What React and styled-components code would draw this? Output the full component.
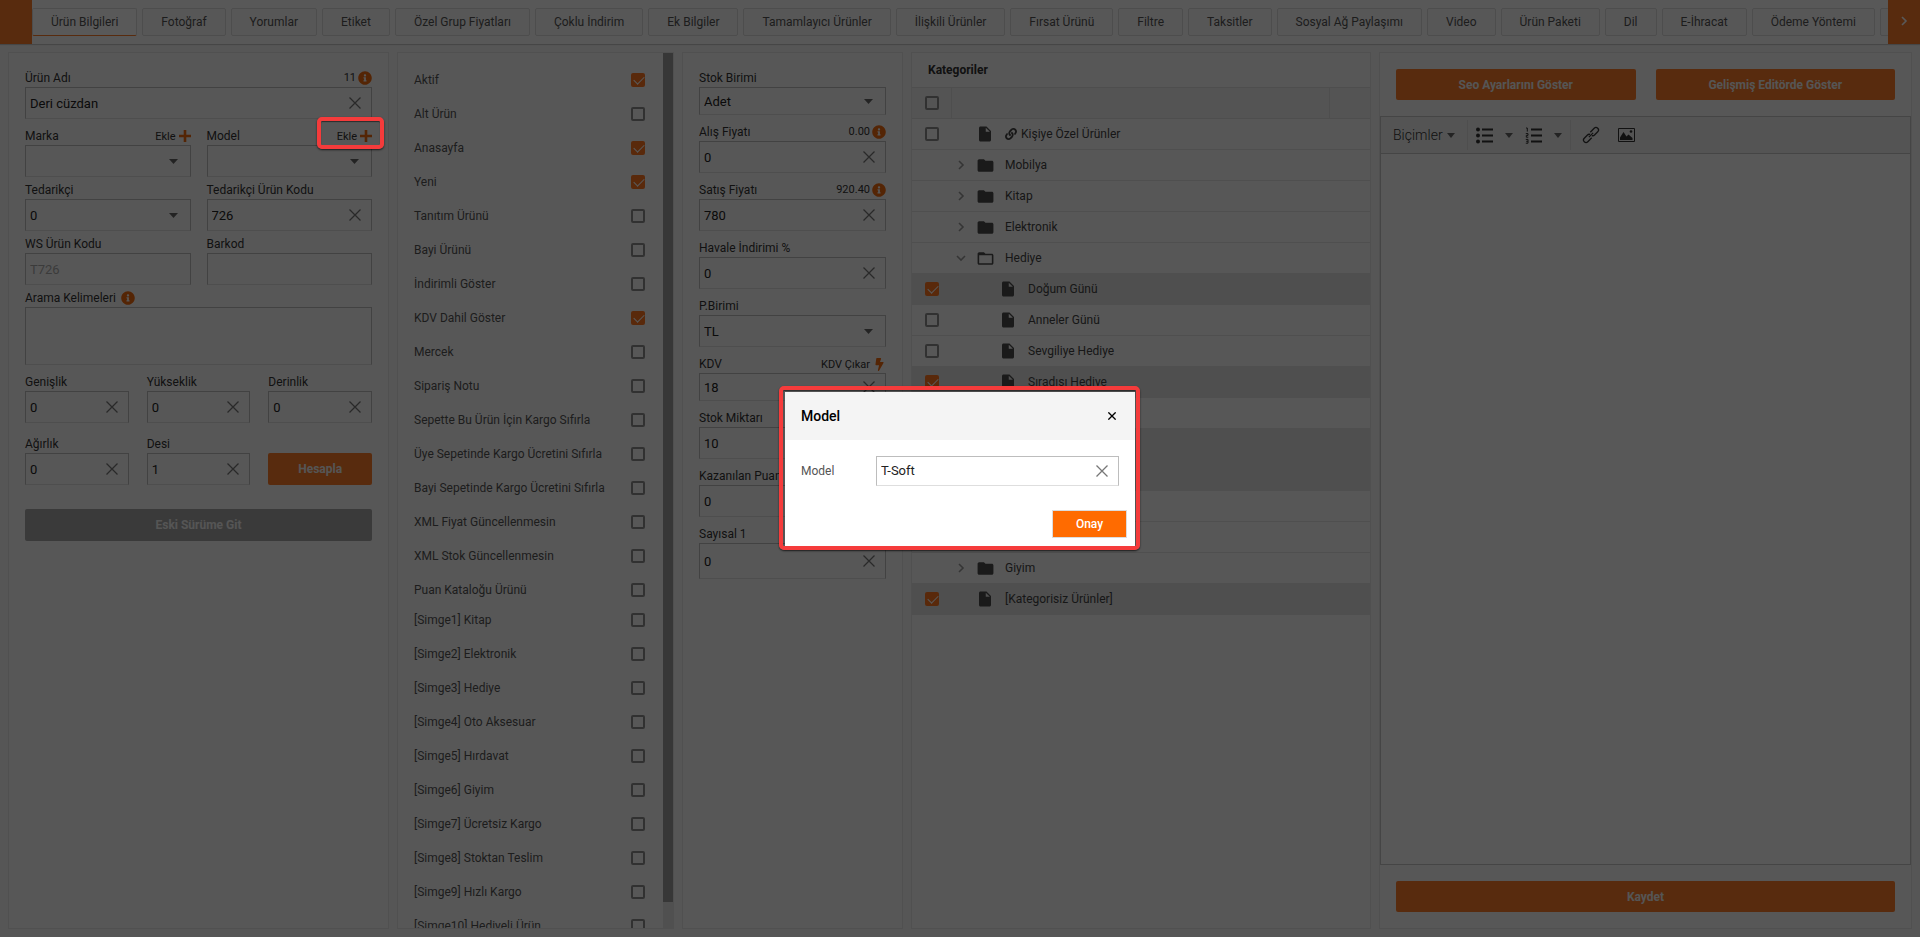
import React from 'react';
import styled, { createGlobalStyle } from 'styled-components';
import { FaBolt, FaInfoCircle, FaLink, FaPlus } from 'react-icons/fa';
import { MdFolder, MdFolderOpen, MdInsertDriveFile } from 'react-icons/md';

const GlobalStyle = createGlobalStyle`
  * {
    box-sizing: border-box;
  }

  body {
    margin: 0;
    background: #f7f7f7;
    color: #333;
    font-family: Roboto, 'Liberation Sans', sans-serif;
    font-size: 12px;
  }

  button, input, select, textarea {
    font-family: inherit;
    font-size: inherit;
    color: inherit;
  }
`;

const Page = styled.div`
  display: flex;
  flex-direction: column;
  height: 100vh;
`;

/* tabs */

const TabBar = styled.header`
  display: flex;
  flex: none;
  height: 44px;
  background: #fdfdfd;
  box-shadow: 0 1px 1px #c8c8c8;
`;

const ScrollButton = styled.button`
  flex: none;
  width: 32px;
  padding: 0;
  border: 0;
  background: #fc7b28;
  color: #fff;
`;

const Tabs = styled.nav`
  display: flex;
  flex: 1;
  align-items: center;
  gap: 5px;
  min-width: 0;
  overflow: hidden;
`;

const Tab = styled.button`
  flex: none;
  height: 28px;
  padding: 0 18px;
  border: 1px solid #dcdcdc;
  border-bottom-color: ${props => (props.$active ? '#fc7b28' : '#dcdcdc')};
  border-radius: 2px;
  background: ${props => (props.$active ? '#fff' : '#f9f9f9')};
  color: #555;
`;

/* panels */

const Columns = styled.main`
  display: grid;
  flex: 1;
  grid-template-columns: 381fr 277fr 221fr 460fr 533fr;
  gap: 8px;
  min-height: 0;
  padding: 8px;
`;

const Panel = styled.section`
  display: flex;
  flex-direction: column;
  min-width: 0;
  min-height: 0;
  border: 1px solid #e6e6e6;
  background: #fafafa;
`;

const FormPanel = styled(Panel)`
  gap: ${props => props.$gap || 4}px;
  padding: 16px;
`;

const FieldRow = styled.div`
  display: grid;
  grid-template-columns: repeat(${props => props.$columns}, minmax(0, 1fr));
  align-items: end;
  gap: ${props => (props.$columns > 2 ? 18 : 16)}px;
  margin-top: ${props => props.$space || 0}px;
`;

const FieldBox = styled.div`
  min-width: 0;
`;

const FieldHead = styled.div`
  display: flex;
  justify-content: space-between;
  height: 18px;
  line-height: 18px;
  white-space: nowrap;
`;

const FieldExtra = styled.span`
  display: flex;
  align-items: center;
  gap: 2px;
  font-size: 11px;

  svg {
    color: #f06a10;
  }
`;

const LabelGroup = styled.span`
  display: flex;
  align-items: center;
  gap: 5px;

  svg {
    color: #f06a10;
  }
`;

const LinkButton = styled.button`
  position: relative;
  display: flex;
  align-items: center;
  gap: 3px;
  padding: 0;
  border: 0;
  background: none;
  font-size: 11px;

  svg {
    color: #f06a10;
  }
`;

const Control = styled.div`
  display: flex;
  align-items: center;
  height: ${props => props.$height || 32}px;
  border: 1px solid #bdbdbd;
  border-bottom-color: #dedede;
  background: ${props => props.$background || 'transparent'};
  font-size: 13px;
`;

const TextInput = styled.input`
  flex: 1;
  min-width: 0;
  height: 100%;
  padding: 0 4px;
  border: 0;
  outline: 0;
  background: none;
  color: #222;

  &:disabled {
    color: #aaa;
  }
`;

const ClearButton = styled.button`
  display: flex;
  flex: none;
  padding: 4px 10px;
  border: 0;
  background: none;
  color: #777;
`;

const SelectBox = styled(Control)`
  display: grid;
  grid-template-columns: minmax(0, 1fr);

  > * {
    grid-area: 1 / 1;
  }

  > svg {
    justify-self: end;
    margin-right: 12px;
    pointer-events: none;
  }
`;

const Select = styled.select`
  width: 100%;
  height: 100%;
  padding: 0 4px;
  border: 0;
  outline: 0;
  appearance: none;
  background: none;
  color: #222;
`;

const TextArea = styled.textarea`
  display: block;
  width: 100%;
  height: 58px;
  border: 1px solid #bdbdbd;
  border-bottom-color: #dedede;
  outline: 0;
  background: none;
  resize: none;
`;

const Button = styled.button`
  flex: ${props => (props.$grow ? 1 : 'none')};
  height: ${props => props.$height || 32}px;
  margin-top: ${props => props.$space || 0}px;
  border: 0;
  border-radius: 2px;
  background: ${props => (props.$muted ? '#a6a6a6' : '#fc7b28')};
  color: #f4f4f4;
  font-weight: 700;
`;

const Checkbox = styled.input.attrs({ type: 'checkbox' })`
  display: block;
  flex: none;
  width: 14px;
  height: 14px;
  margin: 0;
  appearance: none;
  border: 2px solid #8c8c8c;
  border-radius: 2px;

  &:checked {
    border-color: #ff7620;
    background: #ff7620;
  }

  &:checked::after {
    content: '';
    display: block;
    width: 9px;
    height: 5px;
    margin: 1px 0 0 1px;
    border: solid #fff;
    border-width: 0 0 1px 1px;
    transform: rotate(-45deg);
  }
`;

/* status list */

const StatusPanel = styled(Panel)`
  flex-direction: row;
`;

const StatusScroller = styled.div`
  display: flex;
  flex: 1;
  flex-direction: column;
  gap: 8px;
  min-width: 0;
  overflow-y: auto;
  padding: 16px 18px 16px 16px;
  scrollbar-width: none;
`;

const ScrollTrack = styled.div`
  flex: none;
  width: 10px;
  background: #e4e4e4;
`;

const ScrollThumb = styled.div`
  height: 97%;
  background: #9e9e9e;
`;

const StatusGroup = styled.div`
  display: flex;
  flex-direction: column;
  flex: none;
  gap: 12px;
`;

const StatusItem = styled.label`
  display: flex;
  align-items: center;
  justify-content: space-between;
  height: 22px;
  color: #555;
  white-space: nowrap;
`;

/* category tree */

const PanelTitle = styled.h2`
  margin: 0;
  padding: 0 16px;
  font-size: 12px;
  font-weight: 700;
  line-height: 34px;
`;

const Tree = styled.table`
  width: 100%;
  border-collapse: collapse;
  table-layout: fixed;
`;

const TreeHeadCell = styled.th`
  width: ${props => (props.$width ? `${props.$width}px` : 'auto')};
  height: 31px;
  padding: 0 0 0 13px;
  border: solid #e0e0e0;
  border-width: 1px 0;

  & + & {
    border-left-width: 1px;
  }
`;

const TreeHead = styled.thead`
  background: #efefef;
`;

const TreeRow = styled.tr`
  height: 31px;
  border-bottom: 1px solid #e2e2e2;
  background: ${props => (props.$selected ? '#e2e2e2' : 'transparent')};
`;

const TreeCell = styled.td`
  padding: 0 0 0 13px;
`;

const TreeNode = styled.td`
  padding: 0 0 0 ${props => props.$level * 23}px;
`;

const NodeLabel = styled.div`
  display: flex;
  align-items: center;
  gap: 4px;
  height: 30px;
  color: #444;
`;

const Toggle = styled.span`
  display: flex;
  justify-content: center;
  width: 20px;
  color: #999;
`;

const NodeIcon = styled.span`
  display: flex;
  justify-content: center;
  width: 20px;
  margin-right: 6px;
  color: #4a4a4a;
`;

/* editor */

const ButtonRow = styled.div`
  display: flex;
  flex: none;
  gap: 20px;
  padding: 16px;
`;

const Editor = styled.div`
  display: flex;
  flex: 1;
  flex-direction: column;
  min-height: 0;
  border: 1px solid #c5c5c5;
`;

const Toolbar = styled.div`
  display: flex;
  flex: none;
  align-items: center;
  height: 37px;
  border-bottom: 1px solid #c5c5c5;
  background: #f0f0f0;
`;

const ToolGroup = styled.div`
  display: flex;
  align-items: center;
  gap: ${props => props.$gap}px;
  height: 30px;
  padding: 0 ${props => props.$pad}px;

  & + & {
    border-left: 1px solid #dedede;
  }
`;

const ToolButton = styled.button`
  display: flex;
  align-items: center;
  gap: 4px;
  padding: 0;
  border: 0;
  background: none;
  color: #333;
  font-size: 14px;
  font-weight: 300;
`;

const EditorArea = styled.textarea`
  flex: 1;
  border: 0;
  outline: 0;
  background: #fdfdfd;
  resize: none;
`;

/* dialog */

const Overlay = styled.div`
  position: fixed;
  inset: 0;
  z-index: 10;
  display: flex;
  align-items: center;
  justify-content: center;
  background: rgba(0, 0, 0, 0.65);
`;

const Dialog = styled.form`
  position: relative;
  width: 350px;
  background: #fff;
`;

const DialogHeader = styled.div`
  display: flex;
  align-items: center;
  justify-content: space-between;
  height: 48px;
  padding: 0 16px;
  background: #f4f4f4;
  color: #000;
`;

const DialogTitle = styled.h2`
  margin: 0;
  font-size: 14px;
  font-weight: 500;
`;

const CloseButton = styled.button`
  display: flex;
  padding: 3px;
  border: 0;
  background: none;
`;

const DialogBody = styled.div`
  display: grid;
  grid-template-columns: 75px 1fr;
  align-items: center;
  padding: 16px 16px 24px;
  color: #555;
`;

const DialogFooter = styled.div`
  display: flex;
  justify-content: flex-end;
  padding: 0 8px 8px;
`;

const ConfirmButton = styled.button`
  width: 75px;
  height: 28px;
  border: 1px solid #dcdcdc;
  background: #ff6b00;
  color: #fff;
  font-weight: 500;
`;

const Highlight = styled.span`
  position: absolute;
  inset: ${props => props.$inset};
  z-index: 20;
  border: 4px solid #f53b3b;
  border-radius: 5px;
  box-shadow: 0 1px 2px rgba(0, 0, 0, 0.7), inset 0 1px 1px rgba(0, 0, 0, 0.5);
  pointer-events: none;
`;

const Cross = ({ size = 12 }) => (
  <svg width={size} height={size} viewBox="0 0 12 12" fill="none" stroke="currentColor" strokeWidth={size < 12 ? 2 : 1.3}>
    <path d="M0.5 0.5l11 11M11.5 0.5l-11 11" />
  </svg>
);

const Plus = () => (
  <svg width="12" height="12" viewBox="0 0 12 12" fill="none" stroke="currentColor" strokeWidth="2.6">
    <path d="M6 0v12M0 6h12" />
  </svg>
);

const Caret = ({ width = 9 }) => (
  <svg width={width} height="5" viewBox="0 0 10 5" preserveAspectRatio="none" fill="#666">
    <path d="M0 0h10L5 5z" />
  </svg>
);

const Chevron = ({ open }) => (
  <svg width="10" height="10" viewBox="0 0 10 10" fill="none" stroke="currentColor" strokeWidth="1.6">
    <path d={open ? 'M1 3l4 4 4-4' : 'M3 1l4 4-4 4'} />
  </svg>
);

const BulletListIcon = () => (
  <svg width="17" height="17" viewBox="0 0 17 17" fill="currentColor">
    <circle cx="2" cy="2.5" r="2" />
    <circle cx="2" cy="8.5" r="2" />
    <circle cx="2" cy="14.5" r="2" />
    <path d="M6 1.5h11v2H6zM6 7.5h11v2H6zM6 13.5h11v2H6z" />
  </svg>
);

const NumberListIcon = () => (
  <svg width="17" height="17" viewBox="0 0 17 17" fill="currentColor">
    <path d="M6 1.5h11v2H6zM6 7.5h11v2H6zM6 13.5h11v2H6z" />
    <path
      d="M1 1h1.3v3.6M0.8 6.6h2.2v1.8h-1.7v1.8h2M0.8 12.4h2.2v3.8H0.8M1.2 14.3h1.8"
      fill="none"
      stroke="currentColor"
    />
  </svg>
);

const ChainIcon = () => (
  <svg width="18" height="18" viewBox="0 0 18 18" fill="none" stroke="currentColor" strokeWidth="1.3">
    <g transform="rotate(-45 9 9)">
      <path d="M7.5 11.5H2a2.5 2.5 0 0 1 0-5h4.500a2.5 2.5 0 0 1 2.300 1.500" />
      <path d="M10.5 6.5H16a2.5 2.5 0 0 1 0 5h-4.500a2.5 2.5 0 0 1-2.300-1.500" />
      <path d="M6 9h6" />
    </g>
  </svg>
);

const ImageIcon = () => (
  <svg width="17" height="14" viewBox="0 0 17 14" fill="currentColor">
    <path d="M0.5 0.5h16v13h-16z" fill="none" stroke="currentColor" />
    <path d="M2 12V9.5L5.5 4l3 4.5L10.5 6.5 14.5 10v2z" />
    <circle cx="13" cy="3.5" r="1.3" />
  </svg>
);

const tabs = [
  'Ürün Bilgileri', 'Fotoğraf', 'Yorumlar', 'Etiket', 'Özel Grup Fiyatları', 'Çoklu İndirim',
  'Ek Bilgiler', 'Tamamlayıcı Ürünler', 'İlişkili Ürünler', 'Fırsat Ürünü', 'Filtre', 'Taksitler',
  'Sosyal Ağ Paylaşımı', 'Video', 'Ürün Paketi', 'Dil', 'E-İhracat', 'Ödeme Yöntemi', '',
];

const statuses = [
  ['Aktif', true],
  ['Alt Ürün'],
  ['Anasayfa', true],
  ['Yeni', true],
  ['Tanıtım Ürünü'],
  ['Bayi Ürünü'],
  ['İndirimli Göster'],
  ['KDV Dahil Göster', true],
  ['Mercek'],
  ['Sipariş Notu'],
  ['Sepette Bu Ürün İçin Kargo Sıfırla'],
  ['Üye Sepetinde Kargo Ücretini Sıfırla'],
  ['Bayi Sepetinde Kargo Ücretini Sıfırla'],
  ['XML Fiyat Güncellenmesin'],
  ['XML Stok Güncellenmesin'],
  ['Puan Kataloğu Ürünü'],
];

const symbols = [
  ['[Simge1] Kitap'],
  ['[Simge2] Elektronik'],
  ['[Simge3] Hediye'],
  ['[Simge4] Oto Aksesuar'],
  ['[Simge5] Hırdavat'],
  ['[Simge6] Giyim'],
  ['[Simge7] Ücretsiz Kargo'],
  ['[Simge8] Stoktan Teslim'],
  ['[Simge9] Hızlı Kargo'],
  ['[Simge10] Hediyeli Ürün'],
];

const categories = [
  { name: 'Kişiye Özel Ürünler', type: 'file', linked: true },
  { name: 'Mobilya', type: 'folder' },
  { name: 'Kitap', type: 'folder' },
  { name: 'Elektronik', type: 'folder' },
  { name: 'Hediye', type: 'open' },
  { name: 'Doğum Günü', type: 'file', level: 1, selected: true },
  { name: 'Anneler Günü', type: 'file', level: 1 },
  { name: 'Sevgiliye Hediye', type: 'file', level: 1 },
  { name: 'Sıradışı Hediye', type: 'file', level: 1, selected: true },
  { type: 'file', level: 1 },
  { type: 'file', level: 1, selected: true },
  { type: 'file', level: 1, selected: true },
  { type: 'folder' },
  { type: 'folder' },
  { name: 'Giyim', type: 'folder' },
  { name: '[Kategorisiz Ürünler]', type: 'file', selected: true },
];

const nodeIcons = {
  file: <MdInsertDriveFile size={18} />,
  folder: <MdFolder size={19} />,
  open: <MdFolderOpen size={19} />,
};

function Field({ id, label, value, extra, height, disabled, clearable = true }) {
  return (
    <FieldBox>
      <FieldHead>
        <label htmlFor={id}>{label}</label>
        {extra}
      </FieldHead>
      <Control $height={height}>
        <TextInput id={id} type="text" defaultValue={value} disabled={disabled} />
        {clearable && (
          <ClearButton type="button" aria-label="Temizle">
            <Cross />
          </ClearButton>
        )}
      </Control>
    </FieldBox>
  );
}

function SelectField({ id, label, value = '', extra, height }) {
  return (
    <FieldBox>
      <FieldHead>
        <label htmlFor={id}>{label}</label>
        {extra}
      </FieldHead>
      <SelectBox $height={height}>
        <Select id={id} defaultValue={value}>
          <option value={value}>{value}</option>
        </Select>
        <Caret />
      </SelectBox>
    </FieldBox>
  );
}

function Info({ children }) {
  return (
    <FieldExtra>
      {children}
      <FaInfoCircle size={14} />
    </FieldExtra>
  );
}

function AddButton({ highlighted }) {
  return (
    <LinkButton type="button">
      Ekle
      <Plus />
      {highlighted && <Highlight $inset="-10px -12px -4px -20px" />}
    </LinkButton>
  );
}

function ProductForm() {
  return (
    <FormPanel>
      <Field id="name" label="Ürün Adı" value="Deri cüzdan" extra={<Info>11</Info>} />
      <FieldRow $columns={2} $space={4}>
        <SelectField id="brand" label="Marka" extra={<AddButton />} />
        <SelectField id="model" label="Model" extra={<AddButton highlighted />} />
      </FieldRow>
      <FieldRow $columns={2}>
        <SelectField id="supplier" label="Tedarikçi" value="0" />
        <Field id="supplierCode" label="Tedarikçi Ürün Kodu" value="726" />
      </FieldRow>
      <FieldRow $columns={2}>
        <Field id="wsCode" label="WS Ürün Kodu" value="T726" disabled clearable={false} />
        <Field id="barcode" label="Barkod" value="" clearable={false} />
      </FieldRow>
      <FieldBox>
        <FieldHead>
          <LabelGroup>
            <label htmlFor="keywords">Arama Kelimeleri</label>
            <FaInfoCircle size={14} />
          </LabelGroup>
        </FieldHead>
        <TextArea id="keywords" />
      </FieldBox>
      <FieldRow $columns={3} $space={4}>
        <Field id="width" label="Genişlik" value="0" />
        <Field id="height" label="Yükseklik" value="0" />
        <Field id="depth" label="Derinlik" value="0" />
      </FieldRow>
      <FieldRow $columns={3} $space={8}>
        <Field id="weight" label="Ağırlık" value="0" />
        <Field id="desi" label="Desi" value="1" />
        <Button type="button">Hesapla</Button>
      </FieldRow>
      <Button type="button" $muted $space={20}>Eski Sürüme Git</Button>
    </FormPanel>
  );
}

function StatusList({ items }) {
  return (
    <StatusGroup>
      {items.map(([name, checked]) => (
        <StatusItem key={name}>
          {name}
          <Checkbox defaultChecked={checked} />
        </StatusItem>
      ))}
    </StatusGroup>
  );
}

function PriceForm() {
  return (
    <FormPanel $gap={8}>
      <SelectField id="unit" label="Stok Birimi" value="Adet" height={28} />
      <Field id="buyPrice" label="Alış Fiyatı" value="0" extra={<Info>0.00</Info>} />
      <Field id="sellPrice" label="Satış Fiyatı" value="780" extra={<Info>920.40</Info>} />
      <Field id="discount" label="Havale İndirimi %" value="0" />
      <SelectField id="currency" label="P.Birimi" value="TL" />
      <Field
        id="vat"
        label="KDV"
        value="18"
        height={28}
        extra={<LinkButton type="button">KDV Çıkar<FaBolt size={13} /></LinkButton>}
      />
      <Field id="stock" label="Stok Miktarı" value="10" />
      <Field id="points" label="Kazanılan Puan" value="0" />
      <Field id="numeric1" label="Sayısal 1" value="0" height={36} />
    </FormPanel>
  );
}

function CategoryTree() {
  return (
    <Panel>
      <PanelTitle>Kategoriler</PanelTitle>
      <Tree>
        <TreeHead>
          <tr>
            <TreeHeadCell $width={39}><Checkbox aria-label="Tümünü seç" /></TreeHeadCell>
            <TreeHeadCell />
            <TreeHeadCell $width={41} />
          </tr>
        </TreeHead>
        <tbody>
          {categories.map((item, index) => (
            <TreeRow key={index} $selected={item.selected}>
              <TreeCell>
                {item.type === 'file' && (
                  <Checkbox defaultChecked={item.selected} aria-label={item.name || 'Kategori'} />
                )}
              </TreeCell>
              <TreeNode colSpan={2} $level={item.level || 0}>
                <NodeLabel>
                  <Toggle>{item.type !== 'file' && <Chevron open={item.type === 'open'} />}</Toggle>
                  <NodeIcon>{nodeIcons[item.type]}</NodeIcon>
                  {item.linked && <FaLink size={12} />}
                  {item.name}
                </NodeLabel>
              </TreeNode>
            </TreeRow>
          ))}
        </tbody>
      </Tree>
    </Panel>
  );
}

function DescriptionEditor() {
  return (
    <Panel>
      <ButtonRow>
        <Button type="button" $grow $height={31}>Seo Ayarlarını Göster</Button>
        <Button type="button" $grow $height={31}>Gelişmiş Editörde Göster</Button>
      </ButtonRow>
      <Editor>
        <Toolbar>
          <ToolGroup $gap={0} $pad={12}>
            <ToolButton type="button">Biçimler <Caret width={8} /></ToolButton>
          </ToolGroup>
          <ToolGroup $gap={12} $pad={8}>
            <ToolButton type="button" aria-label="Madde imleri"><BulletListIcon /></ToolButton>
            <ToolButton type="button" aria-label="Madde imi türü"><Caret width={8} /></ToolButton>
            <ToolButton type="button" aria-label="Numaralı liste"><NumberListIcon /></ToolButton>
            <ToolButton type="button" aria-label="Numara türü"><Caret width={8} /></ToolButton>
          </ToolGroup>
          <ToolGroup $gap={18} $pad={11}>
            <ToolButton type="button" aria-label="Bağlantı"><ChainIcon /></ToolButton>
            <ToolButton type="button" aria-label="Resim"><ImageIcon /></ToolButton>
          </ToolGroup>
        </Toolbar>
        <EditorArea aria-label="Açıklama" />
      </Editor>
      <ButtonRow>
        <Button type="button" $grow $height={31}>Kaydet</Button>
      </ButtonRow>
    </Panel>
  );
}

function ModelDialog() {
  return (
    <Overlay>
      <Dialog role="dialog" aria-labelledby="dialogTitle">
        <DialogHeader>
          <DialogTitle id="dialogTitle">Model</DialogTitle>
          <CloseButton type="button" aria-label="Kapat"><Cross size={8} /></CloseButton>
        </DialogHeader>
        <DialogBody>
          <label htmlFor="modelName">Model</label>
          <Control $height={30} $background="#fff">
            <TextInput id="modelName" type="text" defaultValue="T-Soft" />
            <ClearButton type="button" aria-label="Temizle"><Cross /></ClearButton>
          </Control>
        </DialogBody>
        <DialogFooter>
          <ConfirmButton type="button">Onay</ConfirmButton>
        </DialogFooter>
        <Highlight $inset="-6px -5px -4px -6px" />
      </Dialog>
    </Overlay>
  );
}

function App() {
  return (
    <>
      <GlobalStyle />
      <Page>
        <TabBar>
          <ScrollButton type="button" aria-label="Geri" />
          <Tabs>
            {tabs.map((tab, index) => (
              <Tab key={tab} type="button" $active={index === 0}>{tab}</Tab>
            ))}
          </Tabs>
          <ScrollButton type="button" aria-label="İleri"><Chevron /></ScrollButton>
        </TabBar>
        <Columns>
          <ProductForm />
          <StatusPanel>
            <StatusScroller>
              <StatusList items={statuses} />
              <StatusList items={symbols} />
            </StatusScroller>
            <ScrollTrack>
              <ScrollThumb />
            </ScrollTrack>
          </StatusPanel>
          <PriceForm />
          <CategoryTree />
          <DescriptionEditor />
        </Columns>
      </Page>
      <ModelDialog />
    </>
  );
}

export default App;
